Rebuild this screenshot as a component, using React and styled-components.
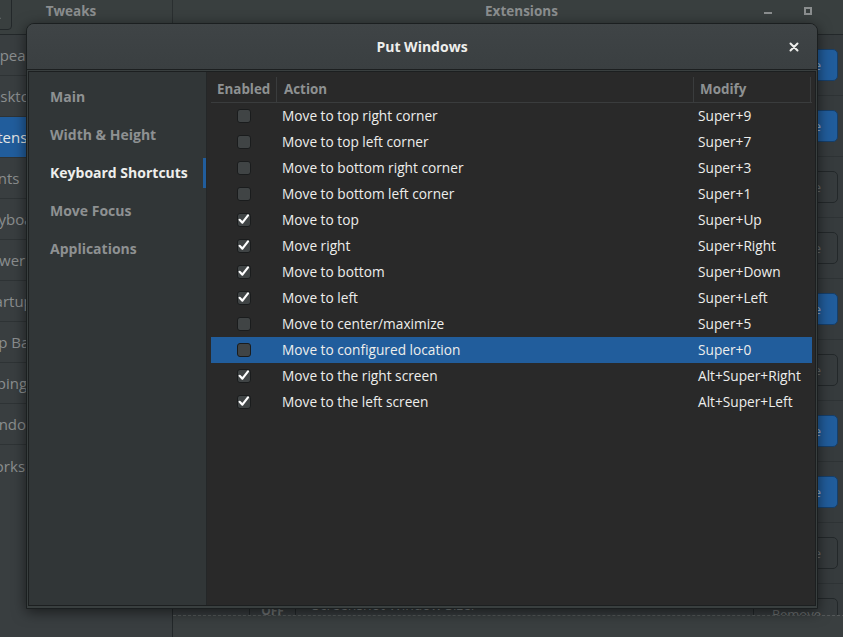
import React from "react";
import styled, { createGlobalStyle } from "styled-components";

const GlobalStyle = createGlobalStyle`
  html, body {
    margin: 0;
    padding: 0;
    background: #363b3d;
    overflow: hidden;
  }
  body {
    font-family: "Open Sans", "DejaVu Sans", sans-serif;
    font-size: 13px;
  }
  #root {
    position: relative;
    width: 843px;
    height: 637px;
    overflow: hidden;
  }
`;

/* ---------- background window (GNOME Tweaks, backdrop) ---------- */

const BackWindow = styled.div`
  width: 900px;
  height: 649px;
  margin-top: -12px;
  margin-left: -30px;
  display: flex;
  flex-direction: column;
  color: #8b8e8f;
  background: #363b3d;
`;

const BackHeader = styled.header`
  flex-shrink: 0;
  height: 47px;
  display: flex;
  background: #393f3f;
  border-bottom: 1px solid #23282a;
  box-sizing: border-box;
`;

const HeaderPane = styled.div`
  display: grid;
  grid-template-columns: 1fr auto 1fr;
  align-items: center;
  width: ${(p) => p.width}px;
  border-right: ${(p) => (p.divider ? "1px solid #2a2f30" : "none")};
  box-sizing: border-box;
`;

const HeaderTitle = styled.span`
  grid-column: 2;
  font-weight: 700;
  font-size: 13.5px;
  color: #8b8e8f;
`;

const SearchButton = styled.button`
  justify-self: start;
  margin-left: 6px;
  width: 36px;
  height: 34px;
  margin-top: 4px;
  border: 1px solid #23282a;
  border-radius: 4px;
  background: #393f3f;
  display: flex;
  align-items: center;
  justify-content: center;
  padding: 0;
`;

const WinControls = styled.div`
  grid-column: 3;
  justify-self: end;
  display: flex;
  padding-right: 2px;
`;

const WinButton = styled.div`
  width: 40px;
  height: 24px;
  display: flex;
  align-items: center;
  justify-content: center;
`;

const MinGlyph = styled.span`
  width: 8px;
  height: 2px;
  margin-top: 4px;
  background: #8b8e8f;
`;

const MaxGlyph = styled.span`
  width: 8px;
  height: 8px;
  box-sizing: border-box;
  border: 2px solid #8b8e8f;
`;

const BackBody = styled.div`
  flex: 1;
  min-height: 0;
  display: flex;
`;

const BackSidebar = styled.nav`
  width: 203px;
  flex-shrink: 0;
  background: #393e40;
  border-right: 1px solid #23282a;
  box-sizing: border-box;
`;

const BackSideItem = styled.div`
  height: 41px;
  display: flex;
  align-items: center;
  padding-left: 11px;
  box-sizing: border-box;
  border-bottom: 1px solid #2e3335;
  font-size: 15px;
  white-space: nowrap;
  color: ${(p) => (p.active ? "#e4e5e5" : "#8b8e8f")};
  background: ${(p) => (p.active ? "#215d9c" : "transparent")};

  &:last-child {
    border-bottom: none;
  }
`;

const BackList = styled.div`
  flex: 1;
  display: flex;
  flex-direction: column;
  min-width: 0;
`;

const BackRows = styled.div`
  flex: 1;
  min-height: 0;
  overflow: hidden;
`;

const BackRow = styled.div`
  height: 61px;
  display: flex;
  align-items: center;
  padding: 0 32px 0 76px;
  box-sizing: border-box;
  border-bottom: 1px solid #2e3335;
`;

const OffSwitch = styled.div`
  width: 45px;
  height: 24px;
  margin-top: -8px;
  border: 1px solid #23282a;
  border-radius: 4px;
  display: flex;
  align-items: center;
  justify-content: center;
  font-size: 12px;
  font-weight: 700;
  color: #6f7374;
`;

const ExtText = styled.div`
  margin-left: 16px;
  display: flex;
  flex-direction: column;
  line-height: 18px;
`;

const ExtName = styled.span`
  font-size: 14px;
  color: #7c8081;
`;

const ExtDesc = styled.span`
  font-size: 12px;
  color: #6a6e6f;
`;

const RowButton = styled.div`
  margin-left: auto;
  width: 85px;
  height: 32px;
  box-sizing: border-box;
  border-radius: 5px;
  display: flex;
  align-items: center;
  justify-content: flex-end;
  padding-right: 16px;
  font-size: 13px;
  border: 1px solid ${(p) => (p.primary ? "#163f6a" : "#23282a")};
  background: ${(p) => (p.primary ? "#215d9c" : "#363b3d")};
  color: ${(p) => (p.primary ? "#9bb4cf" : "#6c7071")};
`;

const BackFooter = styled.div`
  flex-shrink: 0;
  height: 21px;
  background: #3a3f40;
  border-top: 1px dashed #55595a;
`;

/* ---------- dialog ---------- */

const Dialog = styled.section`
  position: absolute;
  left: 26px;
  top: 23px;
  width: 792px;
  height: 586px;
  box-sizing: border-box;
  display: flex;
  flex-direction: column;
  background: #393f3f;
  border: 1px solid #1b1f20;
  border-radius: 8px 8px 0 0;
  box-shadow: 0 3px 14px rgba(0, 0, 0, 0.55);
  color: #eeeeec;
`;

const DialogHeader = styled.header`
  flex-shrink: 0;
  height: 46px;
  display: grid;
  grid-template-columns: 1fr auto 1fr;
  align-items: center;
  background: linear-gradient(#3f4446, #3a3f41);
  border-bottom: 1px solid #1c1f20;
  border-radius: 7px 7px 0 0;
  box-sizing: border-box;
`;

const DialogTitle = styled.h1`
  grid-column: 2;
  margin: 0 0 1px;
  font-size: 14px;
  font-weight: 700;
  color: #eeeeec;
`;

const CloseButton = styled.button`
  grid-column: 3;
  justify-self: end;
  margin-right: 14px;
  width: 18px;
  height: 18px;
  padding: 0;
  border: none;
  background: none;
  display: flex;
  align-items: center;
  justify-content: center;
`;

const DialogBody = styled.div`
  flex: 1;
  min-height: 0;
  display: flex;
  padding: 1px 1px 2px;
`;

const Frame = styled.div`
  flex: 1;
  display: flex;
  border: 1px solid #1c1f20;
`;

const Sidebar = styled.nav`
  width: 178px;
  flex-shrink: 0;
  padding-top: 5px;
  box-sizing: border-box;
  background: #313637;
  border-right: 1px solid #242728;
`;

const SideItem = styled.div`
  position: relative;
  height: 38px;
  display: flex;
  align-items: center;
  padding-left: 21px;
  font-size: 14px;
  font-weight: 700;
  color: ${(p) => (p.active ? "#eeeeec" : "#8e9192")};

  &::after {
    content: "";
    display: ${(p) => (p.active ? "block" : "none")};
    position: absolute;
    right: 0;
    top: 5px;
    bottom: 3px;
    width: 3px;
    background: #215d9c;
  }
`;

const TableArea = styled.div`
  flex: 1;
  padding: 5px 3px 0 4px;
  background: #292929;
`;

const COLS = "66px 417px 117px";

const HeadRow = styled.div`
  display: grid;
  grid-template-columns: ${COLS};
  height: 26px;
  box-sizing: border-box;
  border-bottom: 1px solid #3a3c3d;
`;

const HeadCell = styled.div`
  display: flex;
  align-items: center;
  padding-left: ${(p) => p.pad || 6}px;
  padding-bottom: 1px;
  border-right: 1px solid #3a3c3d;
  font-size: 13.4px;
  font-weight: 700;
  color: #8e9192;
`;

const Row = styled.div`
  display: grid;
  grid-template-columns: ${COLS};
  height: 26px;
  box-sizing: border-box;
  padding-bottom: 1px;
  align-items: center;
  background: ${(p) => (p.selected ? "#215d9c" : "transparent")};
  color: #eeeeec;
  font-size: 13.7px;
`;

const CheckCell = styled.div`
  display: flex;
  justify-content: center;
`;

const Box = styled.span`
  width: 14px;
  height: 14px;
  box-sizing: border-box;
  border: 1px solid #1a1c1d;
  border-radius: 3px;
  background: #404445;
  display: flex;
  align-items: center;
  justify-content: center;
  overflow: visible;
`;

const TextCell = styled.div`
  padding-left: ${(p) => p.pad}px;
  white-space: nowrap;
`;

const Check = ({ on }) => (
  <Box>
    {on && (
      <svg width="14" height="14" viewBox="0 0 14 14" style={{ overflow: "visible" }}>
        <path
          d="M2.6 6.8 L5.4 9.6 L11 2.4"
          fill="none"
          stroke="#ffffff"
          strokeWidth="2.2"
          strokeLinecap="round"
          strokeLinejoin="round"
        />
      </svg>
    )}
  </Box>
);

const backSections = [
  "Appearance",
  "Desktop",
  "Extensions",
  "Fonts",
  "Keyboard & Mouse",
  "Power",
  "Startup Applications",
  "Top Bar",
  "Typing",
  "Windows",
  "Workspaces",
];

const backExtensions = [
  { name: "Alternatetab", primary: true },
  { name: "Applications Menu", primary: true },
  { name: "Auto Move Windows" },
  { name: "Launch new instance" },
  { name: "Native Window Placement", primary: true },
  { name: "Places Status Indicator" },
  { name: "Put Windows", primary: true },
  { name: "Removable Drive Menu", primary: true },
  { name: "Screenshot Tool" },
  { name: "Screenshot Window Sizer" },
];

const pages = ["Main", "Width & Height", "Keyboard Shortcuts", "Move Focus", "Applications"];

const shortcuts = [
  { on: false, action: "Move to top right corner", keys: "Super+9" },
  { on: false, action: "Move to top left corner", keys: "Super+7" },
  { on: false, action: "Move to bottom right corner", keys: "Super+3" },
  { on: false, action: "Move to bottom left corner", keys: "Super+1" },
  { on: true, action: "Move to top", keys: "Super+Up" },
  { on: true, action: "Move right", keys: "Super+Right" },
  { on: true, action: "Move to bottom", keys: "Super+Down" },
  { on: true, action: "Move to left", keys: "Super+Left" },
  { on: false, action: "Move to center/maximize", keys: "Super+5" },
  { on: false, action: "Move to configured location", keys: "Super+0", selected: true },
  { on: true, action: "Move to the right screen", keys: "Alt+Super+Right" },
  { on: true, action: "Move to the left screen", keys: "Alt+Super+Left" },
];

const App = () => (
  <>
    <GlobalStyle />
    <BackWindow>
      <BackHeader>
        <HeaderPane width={203} divider>
          <SearchButton>
            <svg width="16" height="16" viewBox="0 0 16 16">
              <circle cx="6.5" cy="6.5" r="4.5" fill="none" stroke="#8b8e8f" strokeWidth="2" />
              <path d="M10 10 L14 14" stroke="#8b8e8f" strokeWidth="2.2" />
            </svg>
          </SearchButton>
          <HeaderTitle>Tweaks</HeaderTitle>
        </HeaderPane>
        <HeaderPane width={697}>
          <HeaderTitle>Extensions</HeaderTitle>
          <WinControls>
            <WinButton>
              <MinGlyph />
            </WinButton>
            <WinButton>
              <MaxGlyph />
            </WinButton>
            <WinButton />
          </WinControls>
        </HeaderPane>
      </BackHeader>
      <BackBody>
        <BackSidebar>
          {backSections.map((s) => (
            <BackSideItem key={s} active={s === "Extensions"}>
              {s}
            </BackSideItem>
          ))}
        </BackSidebar>
        <BackList>
          <BackRows>
            {backExtensions.map((e) => (
              <BackRow key={e.name}>
                <OffSwitch>OFF</OffSwitch>
                <ExtText>
                  <ExtName>{e.name}</ExtName>
                  <ExtDesc>GNOME Shell extension</ExtDesc>
                </ExtText>
                <RowButton primary={e.primary}>{e.primary ? "Update" : "Remove"}</RowButton>
              </BackRow>
            ))}
          </BackRows>
          <BackFooter />
        </BackList>
      </BackBody>
    </BackWindow>

    <Dialog>
      <DialogHeader>
        <DialogTitle>Put Windows</DialogTitle>
        <CloseButton aria-label="Close">
          <svg width="10" height="10" viewBox="0 0 10 10">
            <path d="M1.5 1.5 L8.5 8.5 M8.5 1.5 L1.5 8.5" stroke="#eeeeec" strokeWidth="2" strokeLinecap="round" />
          </svg>
        </CloseButton>
      </DialogHeader>
      <DialogBody>
        <Frame>
          <Sidebar>
            {pages.map((p) => (
              <SideItem key={p} active={p === "Keyboard Shortcuts"}>
                {p}
              </SideItem>
            ))}
          </Sidebar>
          <TableArea>
            <HeadRow>
              <HeadCell>Enabled</HeadCell>
              <HeadCell pad={7}>Action</HeadCell>
              <HeadCell>Modify</HeadCell>
            </HeadRow>
            {shortcuts.map((s) => (
              <Row key={s.action} selected={s.selected}>
                <CheckCell>
                  <Check on={s.on} />
                </CheckCell>
                <TextCell pad={5}>{s.action}</TextCell>
                <TextCell pad={4}>{s.keys}</TextCell>
              </Row>
            ))}
          </TableArea>
        </Frame>
      </DialogBody>
    </Dialog>
  </>
);

export default App;
